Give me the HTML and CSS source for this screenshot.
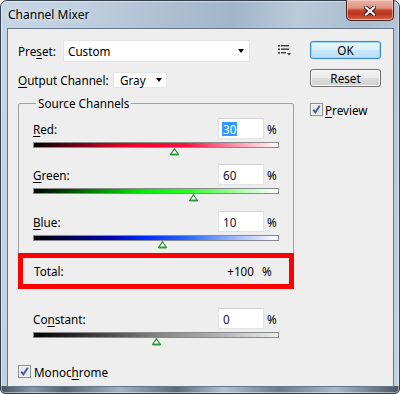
FILE: index.html
```html
<!DOCTYPE html>
<html>
<head>
<meta charset="utf-8">
<title>Channel Mixer</title>
<link rel="stylesheet" href="styles.css">
</head>
<body>
<div class="window">
  <div class="titlebar">
    <span class="title">Channel Mixer</span>
    <div class="close">
      <svg class="close-x" width="12" height="10" viewBox="0 0 12 10">
        <path class="x-edge" d="M2 1.5 L10 8.5 M10 1.5 L2 8.5"/>
        <path class="x-main" d="M2 1.5 L10 8.5 M10 1.5 L2 8.5"/>
      </svg>
    </div>
  </div>
  <div class="client">
    <div class="left">
      <div class="row preset-row">
        <span class="lbl lbl-preset">Pre<u>s</u>et:</span>
        <div class="select select-preset"><span>Custom</span><span class="arrow"></span></div>
        <svg class="menu-icon" width="14" height="12" viewBox="0 0 14 12">
          <rect x="0" y="1" width="2" height="1.6"/>
          <rect x="0" y="4.5" width="2" height="1.6"/>
          <rect x="0" y="8" width="2" height="1.6"/>
          <rect x="3" y="1" width="8" height="1.4"/>
          <rect x="3" y="4.5" width="8" height="1.4"/>
          <rect x="3" y="8" width="5" height="1.4"/>
          <polygon points="9,9 13,9 11,11.5"/>
        </svg>
      </div>
      <div class="row output-row">
        <span class="lbl lbl-output"><u>O</u>utput Channel:</span>
        <div class="select select-gray"><span>Gray</span><span class="arrow"></span></div>
      </div>
      <div class="group">
        <div class="legend">Source Channels</div>
        <div class="channel ch-red">
          <div class="ch-top"><span class="ch-label"><u>R</u>ed:</span><div class="field"><span class="sel">30</span></div><span class="pct">%</span></div>
          <div class="bar bar-red"></div>
          <div class="track">
            <svg class="thumb" style="left:calc(57.5% - 4px)" width="9" height="8" viewBox="0 0 9 8"><polygon points="4.5,0.7 8.4,6.5 0.6,6.5"/><rect x="0.5" y="5.5" width="8" height="2"/></svg>
          </div>
        </div>
        <div class="channel ch-green">
          <div class="ch-top"><span class="ch-label"><u>G</u>reen:</span><div class="field">60</div><span class="pct">%</span></div>
          <div class="bar bar-green"></div>
          <div class="track">
            <svg class="thumb" style="left:calc(65% - 4px)" width="9" height="8" viewBox="0 0 9 8"><polygon points="4.5,0.7 8.4,6.5 0.6,6.5"/><rect x="0.5" y="5.5" width="8" height="2"/></svg>
          </div>
        </div>
        <div class="channel ch-blue">
          <div class="ch-top"><span class="ch-label"><u>B</u>lue:</span><div class="field">10</div><span class="pct">%</span></div>
          <div class="bar bar-blue"></div>
          <div class="track">
            <svg class="thumb" style="left:calc(52.5% - 4px)" width="9" height="8" viewBox="0 0 9 8"><polygon points="4.5,0.7 8.4,6.5 0.6,6.5"/><rect x="0.5" y="5.5" width="8" height="2"/></svg>
          </div>
        </div>
        <div class="total">
          <span class="total-label">Total:</span>
          <span class="total-val">+100</span>
          <span class="total-pct">%</span>
        </div>
      </div>
      <div class="channel ch-constant">
        <div class="ch-top"><span class="ch-label">Co<u>n</u>stant:</span><div class="field">0</div><span class="pct">%</span></div>
        <div class="bar bar-gray"></div>
        <div class="track">
          <svg class="thumb" style="left:calc(50% - 4px)" width="9" height="8" viewBox="0 0 9 8"><polygon points="4.5,0.7 8.4,6.5 0.6,6.5"/><rect x="0.5" y="5.5" width="8" height="2"/></svg>
        </div>
      </div>
      <div class="check-row mono">
        <svg class="checkbox" width="13" height="13" viewBox="0 0 13 13"><rect class="cb-outer" x="0.5" y="0.5" width="12" height="12"/><rect class="cb-inner" x="2" y="2" width="9" height="9"/><path class="cb-mark" d="M3.2 6.6 L5.4 9.4 L9.8 2.8"/></svg>
        <span>Monoc<u>h</u>rome</span>
      </div>
    </div>
    <div class="right">
      <div class="btn btn-ok">OK</div>
      <div class="btn btn-reset">Reset</div>
      <div class="check-row preview">
        <svg class="checkbox" width="13" height="13" viewBox="0 0 13 13"><rect class="cb-outer" x="0.5" y="0.5" width="12" height="12"/><rect class="cb-inner" x="2" y="2" width="9" height="9"/><path class="cb-mark" d="M3.2 6.6 L5.4 9.4 L9.8 2.8"/></svg>
        <span><u>P</u>review</span>
      </div>
    </div>
  </div>
</div>
</body>
</html>
```
FILE: styles.css
```css
* { box-sizing: border-box; }
html, body { margin: 0; padding: 0; }
body {
  width: 400px;
  height: 394px;
  overflow: hidden;
  background: #ffffff;
  font-family: "Noto Sans", "Open Sans", sans-serif;
  font-size: 11.7px;
  color: #000;
}
u { text-decoration: underline; text-underline-offset: 2px; }

.window {
  position: relative;
  width: 400px;
  height: 394px;
  border: 1px solid #34404c;
  border-radius: 7px 7px 5px 5px;
  display: flex;
  flex-direction: column;
  background:
    linear-gradient(90deg, #47525f 0%, #8797a8 8%, #56626f 16%, #a3b3c4 30%, #5d6a79 44%, #b2c2d3 56%, #6b7989 70%, #a9b9ca 84%, #4b5663 100%) left bottom / 100% 7px no-repeat,
    linear-gradient(100deg, #c7d6e5 0%, #bfcfdf 18%, #aebfd2 36%, #a2b5c9 50%, #b9cadb 64%, #aabcd0 78%, #c4d3e2 100%);
  box-shadow: inset 0 0 0 1px rgba(255,255,255,0.45);
}

.titlebar {
  height: 27px;
  display: flex;
  align-items: center;
  padding-left: 7px;
}
.title {
  font-size: 12px;
  line-height: 16px;
  color: #000;
  text-shadow: 0 0 6px rgba(255,255,255,0.9);
}
.close {
  position: absolute;
  top: -1px;
  right: 5px;
  width: 48px;
  height: 21px;
  border: 1px solid #4a2420;
  border-top: none;
  border-radius: 0 0 5px 5px;
  background: linear-gradient(180deg, #e9b4a6 0%, #dd9582 40%, #c4422a 52%, #b9341d 70%, #d4684d 100%);
  box-shadow: inset 0 0 0 1px rgba(255,220,210,0.55);
  display: flex;
  align-items: center;
  justify-content: center;
}
.close-x { display: block; margin-top: 1px; }
.x-edge { stroke: #3b1810; stroke-width: 4.2; fill: none; stroke-linecap: square; }
.x-main { stroke: #ffffff; stroke-width: 2.2; fill: none; stroke-linecap: square; }

.client {
  margin: 0 5px 0 6px;
  height: 359px;
  border: 1px solid #65758a;
  background: #eeeeee;
  display: flex;
  align-items: flex-start;
}

.left {
  width: 276px;
  margin-left: 10px;
  padding-top: 11px;
  display: flex;
  flex-direction: column;
}
.right {
  width: 71px;
  margin-left: 16px;
  padding-top: 12px;
  display: flex;
  flex-direction: column;
}

.row { display: flex; align-items: center; }
.preset-row { height: 22px; }
.output-row { height: 16px; margin-top: 10px; }
.lbl-preset { width: 45px; }
.lbl-output { width: 95px; }

.select {
  height: 100%;
  background: #ffffff;
  border: 1px solid #e4e4e4;
  display: flex;
  align-items: center;
  justify-content: space-between;
}
.select-preset { width: 187px; padding: 0 5px 0 4px; }
.select-gray { width: 54px; padding: 0 4px 0 6px; }
.arrow {
  width: 0;
  height: 0;
  border-left: 3.5px solid transparent;
  border-right: 3.5px solid transparent;
  border-top: 4px solid #000;
}
.menu-icon {
  align-self: flex-start;
  margin: 4px 0 0 28px;
  fill: #3a3a3a;
}

.group {
  margin-top: 15px;
  border: 1px solid #a2a2a2;
  border-radius: 2px;
  padding: 0 14px;
  display: flex;
  flex-direction: column;
}
.legend {
  margin: -9px 0 0 3px;
  height: 16px;
  line-height: 16px;
  padding: 0 2px;
  background: #eeeeee;
  align-self: flex-start;
}

.channel { display: flex; flex-direction: column; }
.ch-red { margin-top: 7px; }
.ch-green { margin-top: 7px; }
.ch-blue { margin-top: 8px; }
.ch-constant { margin: 19px 15px 0 15px; }

.ch-top { display: flex; align-items: center; height: 21px; }
.ch-label { flex: 1; }
.field {
  width: 46px;
  height: 21px;
  background: #ffffff;
  border: 1px solid #e3e3e3;
  border-top-color: #d2d2d2;
  padding-left: 4px;
  display: flex;
  align-items: center;
  color: #10103a;
}
.sel {
  background: #3399ff;
  color: #ffffff;
  line-height: 14px;
  padding: 0 1px;
  margin-left: -1px;
}
.pct { width: 12px; margin-left: 3px; }

.bar {
  height: 6px;
  margin-top: 3px;
  border: 1px solid #8a8a8a;
}
.bar-red { background: linear-gradient(90deg, #000 0%, #c00020 30%, #ff0030 45%, #ff1040 62%, #ffa8ba 86%, #fff 100%); }
.bar-green { background: linear-gradient(90deg, #000 0%, #00a000 30%, #00ee00 45%, #22ff22 62%, #b4ffb4 86%, #fff 100%); }
.bar-blue { background: linear-gradient(90deg, #000 0%, #0000b0 30%, #0028ff 45%, #2464ff 62%, #b4c8ff 86%, #fff 100%); }
.bar-gray { background: linear-gradient(90deg, #000 0%, #3c3c3c 25%, #828282 50%, #b0b0b0 75%, #eeeeee 100%); }

.track { position: relative; height: 9px; }
.thumb { position: absolute; top: 0; display: block; }
.thumb polygon { fill: #ffffff; stroke: #1f7f2c; stroke-width: 1.1; }
.thumb rect { fill: #2f9a3e; }

.total {
  margin: 3px -15px -1px -15px;
  height: 36px;
  border: 5px solid #ff0000;
  display: flex;
  align-items: center;
  padding: 0 15px 0 11px;
}
.total-label { flex: 1; }
.total-val { margin-right: 8px; }
.total-pct { width: 12px; }

.check-row { display: flex; align-items: center; }
.checkbox { display: block; flex: none; }
.cb-outer { fill: #f4f4f4; stroke: #8e8f8f; stroke-width: 1; }
.cb-inner { fill: #e3e7ee; }
.cb-mark { fill: none; stroke: #4a5d8f; stroke-width: 1.9; }
.mono { margin-top: 18px; height: 13px; }
.mono span { margin-left: 3px; }
.preview { margin-top: 16px; height: 13px; }
.preview span { margin-left: 2px; }

.btn {
  height: 18px;
  border-radius: 3px;
  display: flex;
  align-items: center;
  justify-content: center;
  line-height: 16px;
}
.btn-ok {
  border: 1px solid #3c8ccc;
  background: linear-gradient(180deg, #eaf6fd 0%, #d9f0fc 48%, #c6e7fa 52%, #b9e0f7 100%);
  box-shadow: inset 0 0 0 1px #9fd6f5, 0 0 1px #59b3e8;
}
.btn-reset {
  margin-top: 10px;
  border: 1px solid #707070;
  background: linear-gradient(180deg, #f2f2f2 0%, #ebebeb 48%, #dddddd 52%, #cfcfcf 100%);
  box-shadow: inset 0 0 0 1px #fbfbfb;
}
```
